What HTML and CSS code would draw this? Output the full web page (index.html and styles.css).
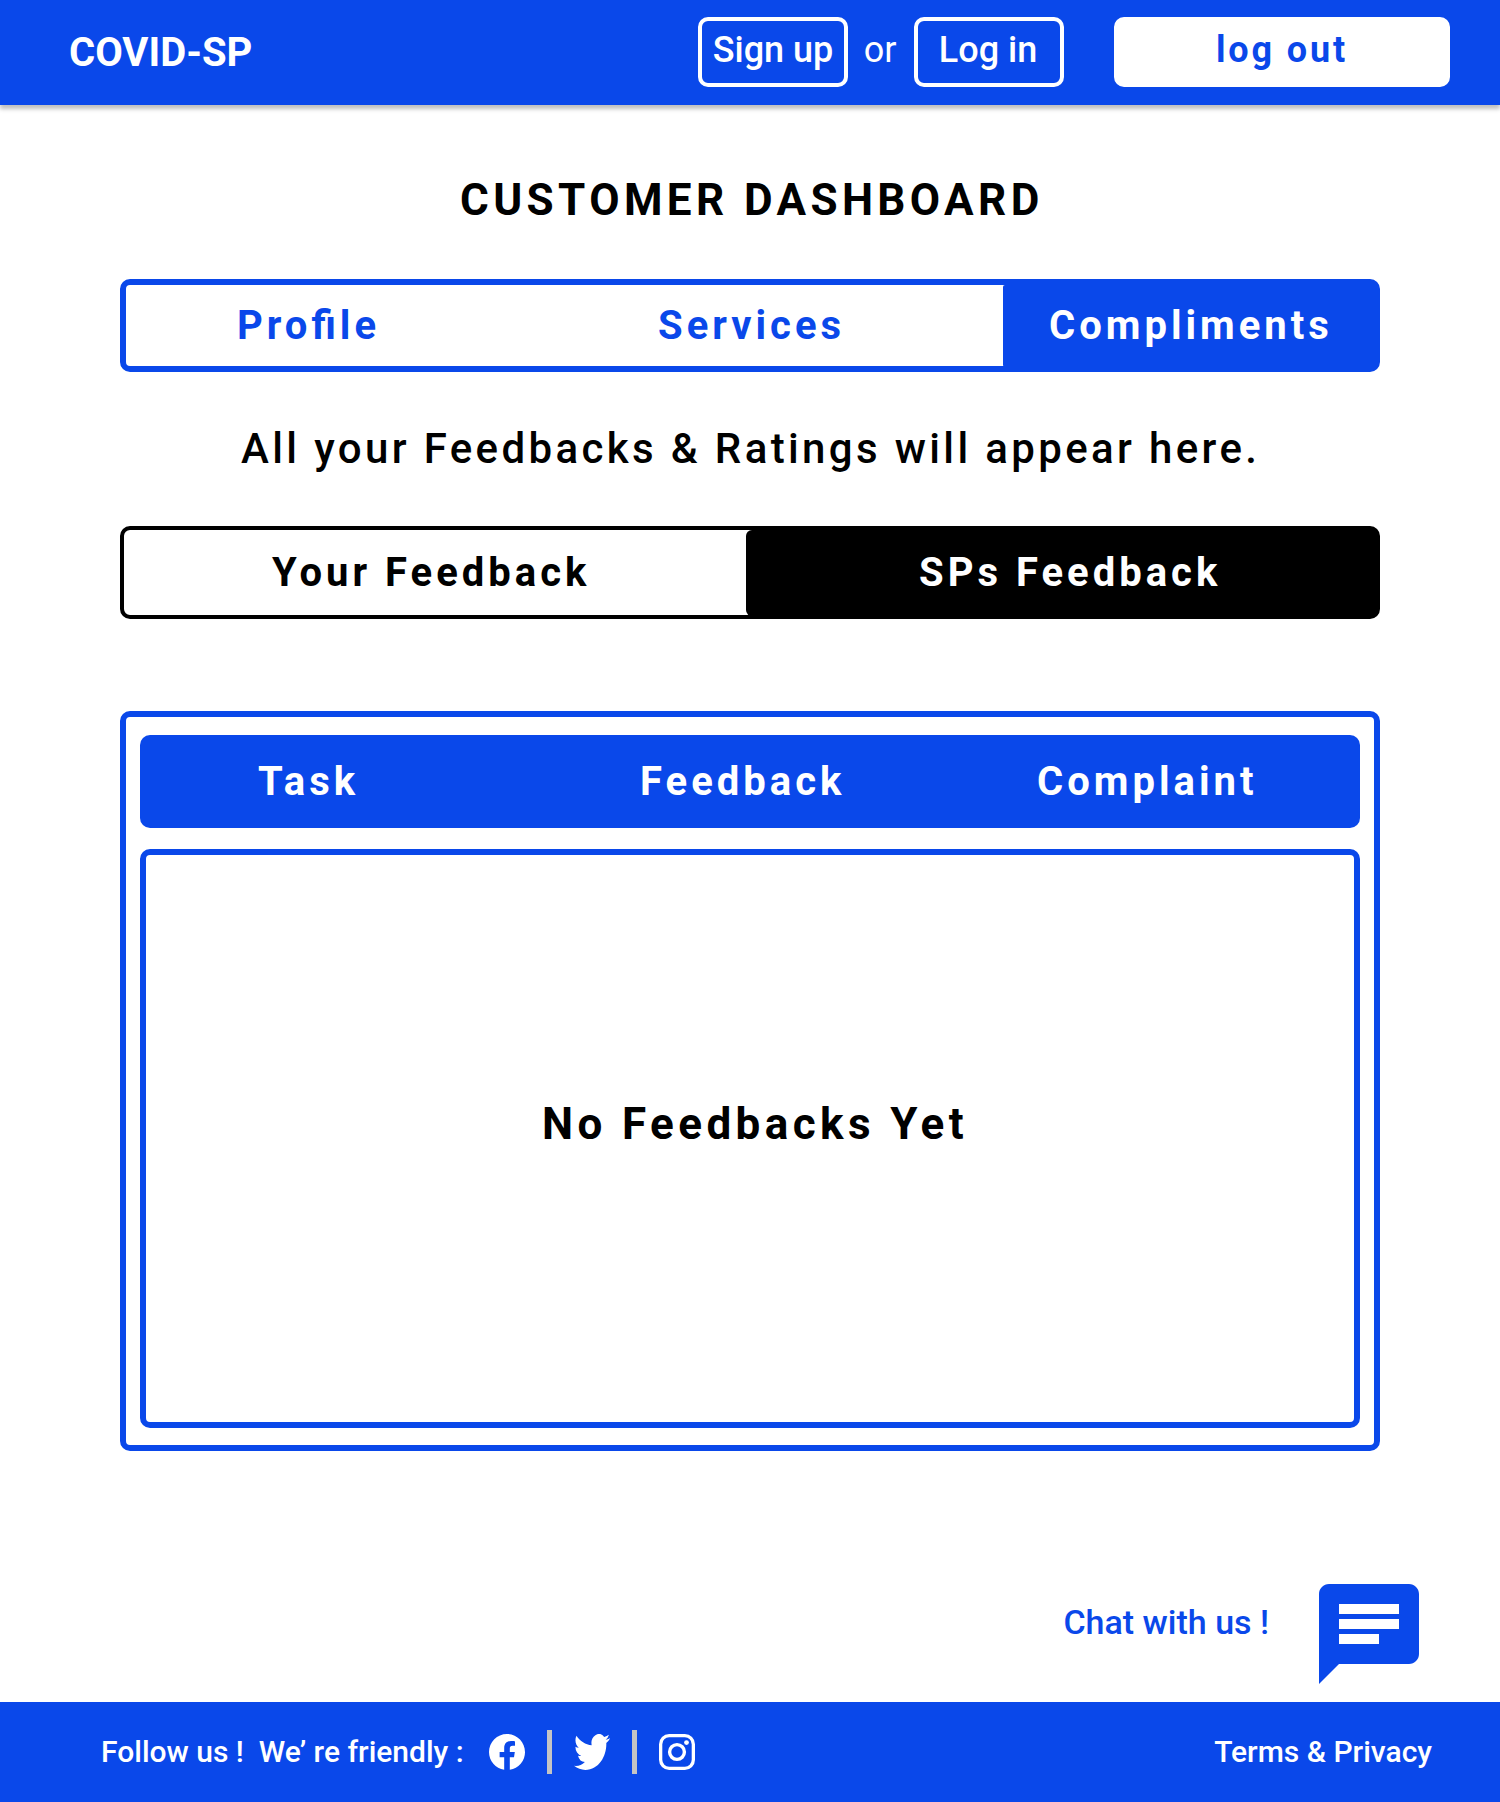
FILE: index.html
```html
<!DOCTYPE html>
<html lang="en">
<head>
<meta charset="utf-8">
<title>COVID-SP Customer Dashboard</title>
<link rel="stylesheet" href="styles.css">
</head>
<body>
<header class="topbar">
  <div class="brand">COVID-SP</div>
  <nav class="auth">
    <a class="btn signup">Sign up</a>
    <span class="or">or</span>
    <a class="btn login">Log in</a>
    <a class="btn logout">log out</a>
  </nav>
</header>
<main class="content">
  <h1 class="title">CUSTOMER DASHBOARD</h1>
  <nav class="tabs">
    <a class="tab profile">Profile</a>
    <a class="tab services">Services</a>
    <a class="tab compliments active">Compliments</a>
  </nav>
  <p class="intro">All your Feedbacks &amp; Ratings will appear here.</p>
  <nav class="tabs feedback-tabs">
    <a class="tab yours">Your Feedback</a>
    <a class="tab sps active">SPs Feedback</a>
  </nav>
  <section class="panel">
    <div class="panel-head">
      <span class="col-task">Task</span>
      <span class="col-feedback">Feedback</span>
      <span class="col-complaint">Complaint</span>
    </div>
    <div class="panel-body">No Feedbacks Yet</div>
  </section>
</main>
<aside class="chat">
  <span class="chat-label">Chat with us !</span>
  <svg class="chat-icon" viewBox="2 2 20 20"><path d="M20 2H4c-1.100 0-2 .9-2 2v18l4-4h14c1.100 0 2-.9 2-2V4c0-1.100-.9-2-2-2zM6 6h12v2H6zM6 9h12v2H6zM6 12h8v2H6z" fill-rule="evenodd"/></svg>
</aside>
<footer class="footer">
  <span class="follow">Follow us !&nbsp; We’ re friendly :</span>
  <div class="social">
    <svg class="icon" viewBox="2 2.040 20 20"><path d="M12 2.040C6.500 2.040 2 6.530 2 12.060C2 17.060 5.660 21.210 10.440 21.960V14.960H7.900V12.060H10.440V9.850C10.440 7.340 11.930 5.960 14.220 5.960C15.310 5.960 16.450 6.150 16.450 6.150V8.620H15.190C13.950 8.620 13.560 9.390 13.560 10.160V12.060H16.340L15.890 14.960H13.560V21.960A10 10 0 0 0 22 12.060C22 6.530 17.500 2.040 12 2.040Z"/></svg>
    <i class="bar"></i>
    <svg class="icon" viewBox="0 2.200 24 19.600" preserveAspectRatio="none"><path d="M23.950 4.570a10 10 0 0 1-2.820.77 4.960 4.960 0 0 0 2.160-2.720c-.95.55-2 .96-3.130 1.180a4.920 4.920 0 0 0-8.380 4.480C7.690 8.100 4.070 6.130 1.640 3.160a4.820 4.820 0 0 0-.67 2.480c0 1.710.87 3.210 2.190 4.100a4.900 4.900 0 0 1-2.230-.62v.06a4.920 4.920 0 0 0 3.950 4.830 5 5 0 0 1-2.210.08 4.940 4.940 0 0 0 4.600 3.420A9.870 9.870 0 0 1 0 19.540a14 14 0 0 0 7.550 2.210c9.050 0 14-7.500 14-13.980 0-.21 0-.42-.02-.63a9.940 9.940 0 0 0 2.460-2.550z"/></svg>
    <i class="bar"></i>
    <svg class="icon" viewBox="0 0 36 36"><rect x="1.650" y="1.650" width="32.700" height="32.700" rx="8.500" fill="none" stroke="#fff" stroke-width="3.300"/><circle cx="18" cy="18" r="7.400" fill="none" stroke="#fff" stroke-width="3.400"/><circle cx="27.500" cy="8.600" r="2.400"/></svg>
  </div>
  <span class="terms">Terms &amp; Privacy</span>
</footer>
</body>
</html>
```
FILE: styles.css
```css
* { box-sizing: border-box; }
body {
  margin: 0;
  width: 1500px;
  height: 1802px;
  display: flex;
  flex-direction: column;
  background: #fff;
  color: #000;
  font-family: Roboto, "Liberation Sans", sans-serif;
  white-space: nowrap;
}
.topbar {
  height: 105px;
  flex: none;
  background: #0a48ea;
  color: #fff;
  display: flex;
  justify-content: space-between;
  padding: 17px 50px 0 69px;
  box-shadow: 0 4px 4px rgba(0, 0, 0, .25);
}
.brand { font-size: 40px; font-weight: 700; line-height: 72px; }
.auth { display: flex; font-size: 36px; font-weight: 500; line-height: 58px; }
.btn {
  width: 150px;
  height: 70px;
  border: 4px solid #fff;
  border-radius: 10px;
  text-align: center;
}
.or { width: 66px; padding-right: 2px; text-align: center; font-weight: 400; line-height: 66px; }
.login { padding-right: 2px; }
.logout {
  width: 336px;
  margin-left: 50px;
  background: #fff;
  color: #0a48ea;
  font-weight: 700;
  letter-spacing: .08em;
}
.content { padding: 0 120px; }
.title {
  margin: 68px 0 0;
  font-size: 44px;
  font-weight: 700;
  letter-spacing: .1em;
  line-height: 54px;
  padding-left: 340px;
}
.tabs {
  margin-top: 52px;
  height: 93px;
  border: 6px solid #0a48ea;
  border-radius: 10px;
  display: grid;
  grid-template-columns: 421px 456px 1fr;
  color: #0a48ea;
  font-size: 40px;
  font-weight: 700;
  letter-spacing: .1em;
  line-height: 82px;
}
.tab { font-feature-settings: "liga" 1; }
.profile { padding-left: 111px; }
.services { padding-left: 111px; }
.compliments { padding-left: 46px; }
.active { background: #0a48ea; color: #fff; border-radius: 2px 0 0 2px; }
.intro {
  margin: 50px 0 0;
  font-size: 42px;
  font-weight: 500;
  letter-spacing: .08em;
  line-height: 54px;
  padding-left: 121px;
}
.feedback-tabs {
  margin-top: 50px;
  border: 4px solid #000;
  color: #000;
  grid-template-columns: 622px 1fr;
  line-height: 86px;
}
.yours { padding-left: 148px; }
.sps { padding-left: 173px; background: #000; border-radius: 6px 0 0 6px; }
.panel {
  margin-top: 92px;
  height: 740px;
  border: 6px solid #0a48ea;
  border-radius: 10px;
  padding: 18px 14px;
  font-size: 40px;
  font-weight: 700;
  letter-spacing: .1em;
}
.panel-head {
  height: 93px;
  border-radius: 10px;
  background: #0a48ea;
  color: #fff;
  display: grid;
  grid-template-columns: 380px 396px 1fr;
  line-height: 93px;
}
.col-task { padding-left: 118px; }
.col-feedback { padding-left: 120px; }
.col-complaint { padding-left: 121px; }
.panel-body {
  margin-top: 21px;
  height: 579px;
  border: 6px solid #0a48ea;
  border-radius: 10px;
  font-size: 44px;
  letter-spacing: .1em;
  line-height: 538px;
  padding-left: 396px;
}
.chat {
  margin-top: auto;
  height: 118px;
  padding-right: 81px;
  display: flex;
  justify-content: flex-end;
  color: #0a48ea;
  font-size: 34px;
  font-weight: 500;
}
.chat-label { line-height: 76px; margin-right: 50px; }
.chat-icon { width: 100px; height: 100px; fill: #0a48ea; }
.footer {
  height: 100px;
  flex: none;
  background: #0a48ea;
  color: #fff;
  display: flex;
  align-items: center;
  padding: 0 68px 0 101px;
  font-size: 30px;
  font-weight: 500;
}
.social { display: flex; align-items: center; gap: 22px; margin-left: 25px; }
.icon { width: 36px; height: 36px; fill: #fff; }
.bar { width: 5px; height: 44px; background: #c4c4c4; }
.follow, .terms { padding-bottom: 2px; }
.terms { margin-left: auto; }
```
